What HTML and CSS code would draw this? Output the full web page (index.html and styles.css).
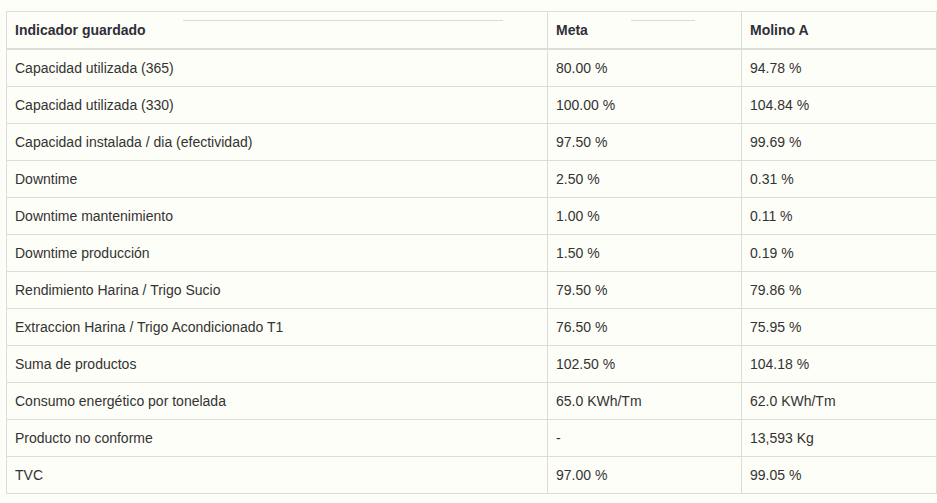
FILE: index.html
```html
<!DOCTYPE html>
<html lang="es">
<head>
<meta charset="utf-8">
<title>Indicadores</title>
<link rel="stylesheet" href="styles.css">
</head>
<body>
<div class="wrap">
  <span class="ghost ghost-a"></span>
  <span class="ghost ghost-b"></span>
  <table class="grid">
    <colgroup>
      <col class="c1"><col class="c2"><col class="c3">
    </colgroup>
    <thead>
      <tr><th>Indicador guardado</th><th>Meta</th><th>Molino A</th></tr>
    </thead>
    <tbody>
      <tr><td>Capacidad utilizada (365)</td><td>80.00 %</td><td>94.78 %</td></tr>
      <tr><td>Capacidad utilizada (330)</td><td>100.00 %</td><td>104.84 %</td></tr>
      <tr><td>Capacidad instalada / dia (efectividad)</td><td>97.50 %</td><td>99.69 %</td></tr>
      <tr><td>Downtime</td><td>2.50 %</td><td>0.31 %</td></tr>
      <tr><td>Downtime mantenimiento</td><td>1.00 %</td><td>0.11 %</td></tr>
      <tr><td>Downtime producción</td><td>1.50 %</td><td>0.19 %</td></tr>
      <tr><td>Rendimiento Harina / Trigo Sucio</td><td>79.50 %</td><td>79.86 %</td></tr>
      <tr><td>Extraccion Harina / Trigo Acondicionado T1</td><td>76.50 %</td><td>75.95 %</td></tr>
      <tr><td>Suma de productos</td><td>102.50 %</td><td>104.18 %</td></tr>
      <tr><td>Consumo energético por tonelada</td><td>65.0 KWh/Tm</td><td>62.0 KWh/Tm</td></tr>
      <tr><td>Producto no conforme</td><td>-</td><td>13,593 Kg</td></tr>
      <tr><td>TVC</td><td>97.00 %</td><td>99.05 %</td></tr>
    </tbody>
  </table>
</div>
</body>
</html>
```
FILE: styles.css
```css
html, body {
  margin: 0;
  padding: 0;
  background: #fefef8;
}
body {
  font-family: "Liberation Sans", Arial, sans-serif;
  font-size: 14px;
  line-height: 20px;
  color: #333;
}
.wrap {
  position: relative;
  padding: 11px 0 0 6px;
}
.grid {
  border-collapse: collapse;
  width: 930px;
  table-layout: fixed;
}
.c1 { width: 541px; }
.c2 { width: 194px; }
.c3 { width: 195px; }
.grid th, .grid td {
  border: 1px solid #ddddd6;
  padding: 8px;
  text-align: left;
  vertical-align: top;
  height: 20px;
}
.grid th {
  font-weight: bold;
  color: #2f2f38;
  border-bottom: 2px solid #ddddd6;
}
.ghost {
  position: absolute;
  top: 20px;
  height: 1px;
  background: #dcdcd4;
}
.ghost-a { left: 183px; width: 320px; }
.ghost-b { left: 631px; width: 64px; }
```
